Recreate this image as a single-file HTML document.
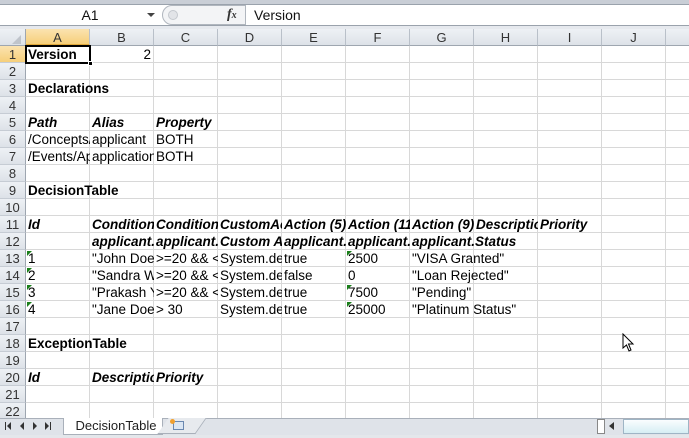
<!DOCTYPE html>
<html><head><style>
*{margin:0;padding:0;box-sizing:border-box}
body{width:689px;height:438px;overflow:hidden;background:#fff;font-family:"Liberation Sans",Arial,sans-serif;position:relative}
.a{position:absolute}
.grid{left:26px;top:46px;width:663px;height:372px;
background-image:linear-gradient(to right,transparent 63px,#d8d8d8 63px),linear-gradient(to bottom,transparent 16px,#d8d8d8 16px);
background-size:64px 100%,100% 17px}
.ch{top:29px;height:17px;background:linear-gradient(#eef1f5,#dde2e8);border-right:1px solid #b9c0c9;border-bottom:1px solid #9ea6b0;font-size:13px;color:#333;text-align:center;line-height:17px;width:64px}
.rh{left:0;width:26px;height:17px;background:linear-gradient(#eef1f5,#dde2e8);border-right:1px solid #9ea6b0;border-bottom:1px solid #c6ccd4;font-size:13px;color:#333;text-align:center;line-height:18px}
.c{height:17px;line-height:18px;font-size:13.5px;white-space:nowrap;overflow:hidden;padding-left:2px;color:#000}
.b{font-weight:bold}.i{font-style:italic}.bi{font-weight:bold;font-style:italic}
.tri{width:0;height:0;border-top:5px solid #1a7f1a;border-right:5px solid transparent}
</style></head><body>
<div class="a" style="left:0;top:0;width:689px;height:4px;background:#c9ced6"></div>
<div class="a" style="left:0;top:4px;width:689px;height:22px;background:#fff;border-top:1px solid #9aa2ac;border-bottom:1px solid #9aa2ac"></div>
<div class="a" style="left:0;top:5px;width:160px;height:20px;font-size:14px;line-height:20px;text-align:center;padding-left:20px;color:#111">A1</div>
<div class="a" style="left:147px;top:13px;width:0;height:0;border-left:4px solid transparent;border-right:4px solid transparent;border-top:4px solid #444"></div>
<div class="a" style="left:162px;top:5px;width:84px;height:20px;background:#f3f4f6;border:1px solid #b0b6be;border-radius:10px 0 0 10px"></div>
<div class="a" style="left:168px;top:10px;width:10px;height:10px;border-radius:5px;background:#e2e4e8;border:1px solid #c4c8ce"></div>
<div class="a" style="left:227px;top:5px;font-size:14px;line-height:20px;font-style:italic;font-weight:bold;font-family:'Liberation Serif',serif;color:#333">f<span style="font-size:10px">x</span></div>
<div class="a" style="left:245px;top:5px;width:1px;height:20px;background:#b0b6be"></div>
<div class="a" style="left:254px;top:5px;font-size:14px;line-height:20px;color:#111">Version</div>
<div class="a" style="left:0;top:26px;width:689px;height:3px;background:#e6e9ee"></div>
<div class="a grid"></div>
<div class="a" style="left:0;top:29px;width:26px;height:17px;background:linear-gradient(#eef1f5,#dde2e8);border-right:1px solid #9ea6b0;border-bottom:1px solid #9ea6b0"></div>
<div class="a" style="left:12px;top:35px;width:0;height:0;border-left:9px solid transparent;border-bottom:9px solid #bfc4cb"></div>
<div class="a ch" style="left:26px;background:linear-gradient(#fbe3b0,#f6cf7a);border-bottom:2px solid #e0a83a">A</div>
<div class="a ch" style="left:90px">B</div><div class="a ch" style="left:154px">C</div><div class="a ch" style="left:218px">D</div><div class="a ch" style="left:282px">E</div><div class="a ch" style="left:346px">F</div><div class="a ch" style="left:410px">G</div><div class="a ch" style="left:474px">H</div><div class="a ch" style="left:538px">I</div><div class="a ch" style="left:602px">J</div><div class="a ch" style="left:666px;width:30px"></div>
<div class="a rh" style="top:46px;background:linear-gradient(#fbe3b0,#f6cf7a)">1</div>
<div class="a rh" style="top:63px">2</div><div class="a rh" style="top:80px">3</div><div class="a rh" style="top:97px">4</div><div class="a rh" style="top:114px">5</div><div class="a rh" style="top:131px">6</div><div class="a rh" style="top:148px">7</div><div class="a rh" style="top:165px">8</div><div class="a rh" style="top:182px">9</div><div class="a rh" style="top:199px">10</div><div class="a rh" style="top:216px">11</div><div class="a rh" style="top:233px">12</div><div class="a rh" style="top:250px">13</div><div class="a rh" style="top:267px">14</div><div class="a rh" style="top:284px">15</div><div class="a rh" style="top:301px">16</div><div class="a rh" style="top:318px">17</div><div class="a rh" style="top:335px">18</div><div class="a rh" style="top:352px">19</div><div class="a rh" style="top:369px">20</div><div class="a rh" style="top:386px">21</div><div class="a rh" style="top:403px">22</div>

<div class="a c b" style="left:26px;top:46px;width:64px">Version</div>
<div class="a" style="left:25px;top:45px;width:66px;height:19px;border:2px solid #000"></div>
<div class="a" style="left:88px;top:61px;width:5px;height:5px;background:#000;border:1px solid #fff"></div>
<div class="a c" style="left:90px;top:46px;width:64px;text-align:right;padding-right:3px">2</div>
<div class="a c b" style="left:26px;top:80px;width:150px">Declarations</div>
<div class="a c bi" style="left:26px;top:114px;width:64px">Path</div>
<div class="a c bi" style="left:90px;top:114px;width:64px">Alias</div>
<div class="a c bi" style="left:154px;top:114px;width:64px">Property</div>
<div class="a c" style="left:26px;top:131px;width:64px">/Concepts/</div>
<div class="a c" style="left:90px;top:131px;width:64px">applicant</div>
<div class="a c" style="left:154px;top:131px;width:64px">BOTH</div>
<div class="a c" style="left:26px;top:148px;width:64px">/Events/Ap</div>
<div class="a c" style="left:90px;top:148px;width:64px">application</div>
<div class="a c" style="left:154px;top:148px;width:64px">BOTH</div>
<div class="a c b" style="left:26px;top:182px;width:150px">DecisionTable</div>
<div class="a c bi" style="left:26px;top:216px;width:64px">Id</div>
<div class="a c bi" style="left:90px;top:216px;width:64px">Condition</div>
<div class="a c bi" style="left:154px;top:216px;width:64px">Condition</div>
<div class="a c bi" style="left:218px;top:216px;width:64px">CustomAct</div>
<div class="a c bi" style="left:282px;top:216px;width:64px">Action (5)</div>
<div class="a c bi" style="left:346px;top:216px;width:64px">Action (11)</div>
<div class="a c bi" style="left:410px;top:216px;width:64px">Action (9)</div>
<div class="a c bi" style="left:474px;top:216px;width:64px">Description</div>
<div class="a c bi" style="left:538px;top:216px;width:64px">Priority</div>
<div class="a c bi" style="left:90px;top:233px;width:64px">applicant.</div>
<div class="a c bi" style="left:154px;top:233px;width:64px">applicant.</div>
<div class="a c bi" style="left:218px;top:233px;width:64px">Custom A</div>
<div class="a c bi" style="left:282px;top:233px;width:64px">applicant.</div>
<div class="a c bi" style="left:346px;top:233px;width:64px">applicant.</div>
<div class="a c bi" style="left:410px;top:233px;width:128px">applicant.Status</div>

<div class="a c" style="left:26px;top:250px;width:64px">1</div><div class="a c" style="left:90px;top:250px;width:64px">"John Doe"</div><div class="a c" style="left:154px;top:250px;width:64px">&gt;=20 &amp;&amp; &lt;</div><div class="a c" style="left:218px;top:250px;width:64px">System.de</div><div class="a c" style="left:282px;top:250px;width:64px">true</div><div class="a c" style="left:346px;top:250px;width:64px">2500</div><div class="a c" style="left:410px;top:250px;width:128px">"VISA Granted"</div>
<div class="a c" style="left:26px;top:267px;width:64px">2</div><div class="a c" style="left:90px;top:267px;width:64px">"Sandra W</div><div class="a c" style="left:154px;top:267px;width:64px">&gt;=20 &amp;&amp; &lt;</div><div class="a c" style="left:218px;top:267px;width:64px">System.de</div><div class="a c" style="left:282px;top:267px;width:64px">false</div><div class="a c" style="left:346px;top:267px;width:64px">0</div><div class="a c" style="left:410px;top:267px;width:128px">"Loan Rejected"</div>
<div class="a c" style="left:26px;top:284px;width:64px">3</div><div class="a c" style="left:90px;top:284px;width:64px">"Prakash Y</div><div class="a c" style="left:154px;top:284px;width:64px">&gt;=20 &amp;&amp; &lt;</div><div class="a c" style="left:218px;top:284px;width:64px">System.de</div><div class="a c" style="left:282px;top:284px;width:64px">true</div><div class="a c" style="left:346px;top:284px;width:64px">7500</div><div class="a c" style="left:410px;top:284px;width:128px">"Pending"</div>
<div class="a c" style="left:26px;top:301px;width:64px">4</div><div class="a c" style="left:90px;top:301px;width:64px">"Jane Doe"</div><div class="a c" style="left:154px;top:301px;width:64px">&gt; 30</div><div class="a c" style="left:218px;top:301px;width:64px">System.de</div><div class="a c" style="left:282px;top:301px;width:64px">true</div><div class="a c" style="left:346px;top:301px;width:64px">25000</div><div class="a c" style="left:410px;top:301px;width:128px">"Platinum Status"</div>
<div class="a tri" style="left:27px;top:251px"></div><div class="a tri" style="left:27px;top:268px"></div><div class="a tri" style="left:27px;top:285px"></div><div class="a tri" style="left:27px;top:302px"></div>
<div class="a tri" style="left:347px;top:251px"></div><div class="a tri" style="left:347px;top:285px"></div><div class="a tri" style="left:347px;top:302px"></div>

<div class="a c b" style="left:26px;top:335px;width:150px">ExceptionTable</div>
<div class="a c bi" style="left:26px;top:369px;width:64px">Id</div>
<div class="a c bi" style="left:90px;top:369px;width:64px">Description</div>
<div class="a c bi" style="left:154px;top:369px;width:64px">Priority</div>

<svg class="a" style="left:622px;top:333px" width="14" height="20" viewBox="0 0 14 20"><path d="M1 1 L1 15 L4.5 12 L7 18 L9 17 L6.5 11 L11 11 Z" fill="#fff" stroke="#000" stroke-width="1"/></svg>

<div class="a" style="left:0;top:418px;width:689px;height:17px;background:#dfe3e9;border-top:1px solid #a9b0ba"></div>
<svg class="a" style="left:4px;top:421px" width="50" height="10" viewBox="0 0 50 10">
<rect x="1" y="1" width="1" height="8" fill="#333"/><path d="M7 1 L3 5 L7 9Z" fill="#333"/>
<path d="M20 1 L16 5 L20 9Z" fill="#333"/>
<path d="M29 1 L33 5 L29 9Z" fill="#333"/>
<path d="M41 1 L45 5 L41 9Z" fill="#333"/><rect x="46" y="1" width="1" height="8" fill="#333"/>
</svg>
<div class="a" style="left:63px;top:418px;width:100px;height:17px;background:#fff;border:1px solid #a9b0ba;border-top:none;font-size:13px;line-height:15px;text-align:center;color:#222;padding-left:6px">DecisionTable</div>
<div class="a" style="left:163px;top:418px;width:38px;height:16px;background:#e7eaee;transform:skewX(-35deg);border-right:1px solid #a9b0ba;border-bottom:1px solid #a9b0ba"></div>
<div class="a" style="left:173px;top:421px;width:11px;height:9px;border:1px solid #6a88b0;background:#dbe6f3"></div>
<div class="a" style="left:170px;top:419px;width:5px;height:5px;border-radius:3px;background:#f0a030"></div>
<div class="a" style="left:597px;top:419px;width:8px;height:15px;background:#fff;border:1px solid #888"></div>
<div class="a" style="left:609px;top:422px;width:0;height:0;border-top:4px solid transparent;border-bottom:4px solid transparent;border-right:5px solid #333"></div>
<div class="a" style="left:623px;top:419px;width:66px;height:15px;background:linear-gradient(#fafdfe,#d6eef4);border:1px solid #9fb5c5"></div>
<div class="a" style="left:0;top:435px;width:689px;height:3px;background:#e4e7eb"></div>
</body></html>
